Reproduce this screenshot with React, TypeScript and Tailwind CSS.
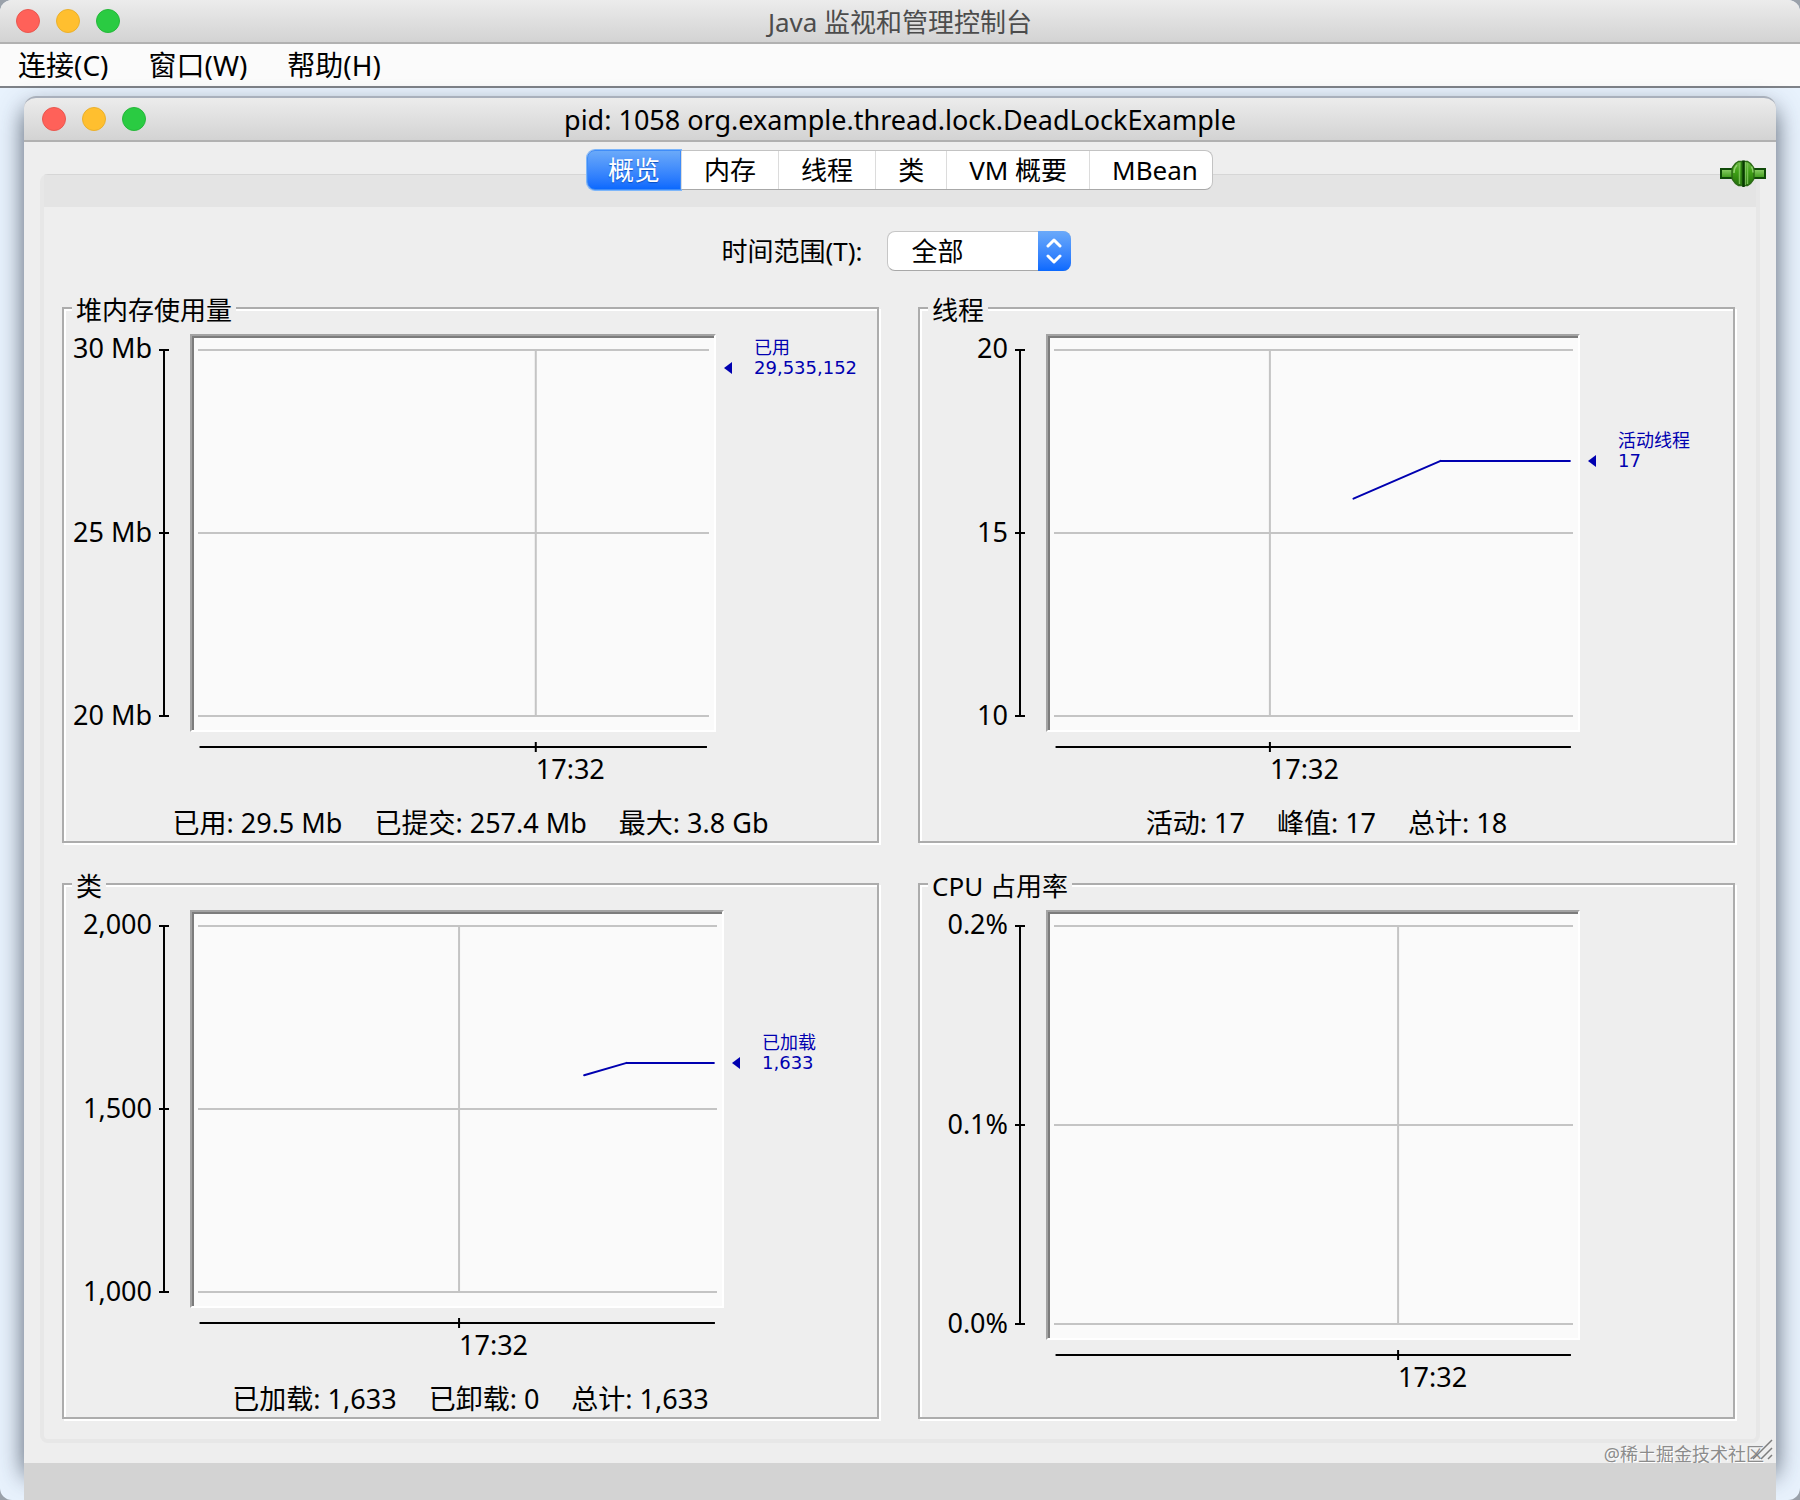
import React, { useState } from "react";

type Point = [number, number];

interface ChartProps {
  title: string;
  yLabels: string[];
  tickX: number;
  tickLabel: string;
  plotClass: string;
  legendClass: string;
  series?: Point[];
  seriesName?: string;
  seriesValue?: string;
  // distance of the current value from the top of the plot, 0..1
  level?: number;
  summary?: string[];
}

const tabs = ["概览", "内存", "线程", "类", "VM 概要", "MBean"];
const menus = ["连接(C)", "窗口(W)", "帮助(H)"];
const ranges = ["全部", "1 分钟", "5 分钟", "10 分钟", "30 分钟", "1 小时"];

const charts: ChartProps[] = [
  {
    title: "堆内存使用量",
    yLabels: ["30 Mb", "25 Mb", "20 Mb"],
    tickX: 66.1,
    tickLabel: "17:32",
    plotClass: "h-[398px]",
    legendClass: "w-[161px]",
    seriesName: "已用",
    seriesValue: "29,535,152",
    level: 0.05,
    summary: ["已用: 29.5 Mb", "已提交: 257.4 Mb", "最大: 3.8 Gb"],
  },
  {
    title: "线程",
    yLabels: ["20", "15", "10"],
    tickX: 41.6,
    tickLabel: "17:32",
    plotClass: "h-[398px]",
    legendClass: "w-[153px]",
    series: [
      [57.7, 40.6],
      [74.5, 30.3],
      [99.4, 30.3],
    ],
    seriesName: "活动线程",
    seriesValue: "17",
    level: 0.303,
    summary: ["活动: 17", "峰值: 17", "总计: 18"],
  },
  {
    title: "类",
    yLabels: ["2,000", "1,500", "1,000"],
    tickX: 50.3,
    tickLabel: "17:32",
    plotClass: "h-[398px]",
    legendClass: "w-[153px]",
    series: [
      [74.4, 40.8],
      [82.6, 37.4],
      [99.4, 37.4],
    ],
    seriesName: "已加载",
    seriesValue: "1,633",
    level: 0.374,
    summary: ["已加载: 1,633", "已卸载: 0", "总计: 1,633"],
  },
  {
    title: "CPU 占用率",
    yLabels: ["0.2%", "0.1%", "0.0%"],
    tickX: 66.3,
    tickLabel: "17:32",
    plotClass: "h-[430px]",
    legendClass: "w-[153px]",
  },
];

const TrafficLights: React.FC = () => (
  <div className="flex gap-4">
    <button
      aria-label="关闭"
      className="size-6 rounded-full border border-[#e9574f] bg-[#ff6159]"
    />
    <button
      aria-label="最小化"
      className="size-6 rounded-full border border-[#eab02c] bg-[#ffbf2f]"
    />
    <button
      aria-label="缩放"
      className="size-6 rounded-full border border-[#25b83a] bg-[#2acb42]"
    />
  </div>
);

const ConnectedIcon: React.FC = () => (
  <svg width="46" height="28" viewBox="0 0 46 28" aria-hidden="true">
    <defs>
      <linearGradient id="plug" x1="0" y1="0" x2="0" y2="1">
        <stop offset="0" stopColor="#6fbb47" />
        <stop offset="0.4" stopColor="#41a317" />
        <stop offset="1" stopColor="#23700a" />
      </linearGradient>
      <linearGradient id="rod" x1="0" y1="0" x2="0" y2="1">
        <stop offset="0" stopColor="#8ed06a" />
        <stop offset="1" stopColor="#3c9a18" />
      </linearGradient>
    </defs>
    <rect x="1" y="9" width="14" height="9" fill="url(#rod)" stroke="#0f4a08" strokeWidth="2" />
    <rect x="31" y="9" width="14" height="9" fill="url(#rod)" stroke="#0f4a08" strokeWidth="2" />
    <path
      d="M18.500 1.500h9l3 2 3 4 .5 3v6l-.5 3-3 4-3 2h-9l-3-2-3-4-.5-3v-6l.5-3 3-4z"
      fill="url(#plug)"
      stroke="#2c6b17"
      strokeWidth="1.500"
    />
    <path d="M17 5q-3 3-3 8M31.500 6.500q1.500 3 1.500 6" fill="none" stroke="#8fd16c" strokeWidth="1.500" />
    <path d="M19.500 3v21M27.500 3v21" stroke="#76bf52" strokeWidth="1.500" />
    <path d="M21.500 2v23" stroke="#2a7a10" strokeWidth="1.500" />
    <path d="M25.200 2v23" stroke="#93d174" strokeWidth="1" />
    <path d="M23.500 0.500v26.500" stroke="#083a02" strokeWidth="2.500" />
  </svg>
);

const Chart: React.FC<ChartProps> = ({
  title,
  yLabels,
  tickX,
  tickLabel,
  plotClass,
  legendClass,
  series = [],
  seriesName,
  seriesValue,
  level = 0,
  summary,
}) => (
  <fieldset className="min-w-0 border-2 border-[#acacac] pl-2 shadow-[2px_2px_0_#fff,inset_2px_2px_0_#fff]">
    <legend className="bg-[#eeeeee] px-1 pt-1 leading-8">{title}</legend>
    <div className="flex pt-2 text-[27px]">
      {/* Y axis */}
      <div className={`flex w-[118px] shrink-0 ${plotClass}`}>
        <div className="flex w-20 flex-col justify-between pb-[3px] text-right leading-7 whitespace-nowrap">
          {yLabels.map((label) => (
            <span key={label}>{label}</span>
          ))}
        </div>
        <div className="w-[18px] py-4 pl-2">
          <svg className="block h-full w-[10px] overflow-visible" stroke="#000" strokeWidth="2">
            <line x1="4" y1="0" x2="4" y2="100%" />
            <line x1="-1" y1="0" x2="9" y2="0" />
            <line x1="-1" y1="50%" x2="9" y2="50%" />
            <line x1="-1" y1="100%" x2="9" y2="100%" />
          </svg>
        </div>
      </div>

      {/* Plot and time axis */}
      <div className="min-w-0 flex-1">
        <div
          className={`border-2 border-t-[#a3a3a3] border-r-white border-b-white border-l-[#a3a3a3] bg-[#fafafa] py-3.5 pr-[5px] pl-1.5 shadow-[inset_2px_2px_0_#7c7c7c] ${plotClass}`}
        >
          <svg className="block h-full w-full overflow-visible" strokeWidth="2">
            <g stroke="#c4c4c4">
              <line x1="0" y1="0" x2="100%" y2="0" />
              <line x1="0" y1="50%" x2="100%" y2="50%" />
              <line x1="0" y1="100%" x2="100%" y2="100%" />
              <line x1={`${tickX}%`} y1="0" x2={`${tickX}%`} y2="100%" />
            </g>
            {series.slice(1).map(([x, y], i) => (
              <line
                key={x}
                x1={`${series[i][0]}%`}
                y1={`${series[i][1]}%`}
                x2={`${x}%`}
                y2={`${y}%`}
                stroke="#0000b0"
                strokeLinecap="round"
              />
            ))}
          </svg>
        </div>
        <div className="pr-[7px] pl-2">
          <svg className="block h-14 w-full overflow-visible">
            <line x1="0.3%" y1="15" x2="99.6%" y2="15" stroke="#000" strokeWidth="2" />
            <line x1={`${tickX}%`} y1="10" x2={`${tickX}%`} y2="20" stroke="#000" strokeWidth="2" />
            <text x={`${tickX}%`} y="47">
              {tickLabel}
            </text>
          </svg>
        </div>
      </div>

      {/* Current value */}
      <div className={`shrink-0 ${legendClass}`}>
        {seriesName && (
          <div
            className="flex items-end pl-2 text-[18px] leading-5 text-[#0000b0]"
            style={{ marginTop: Math.round(level * 366) - 14 }}
          >
            <svg width="30" height="20" viewBox="0 0 30 20" aria-hidden="true">
              <path d="M0 10l8-6v12z" fill="#0000b0" />
            </svg>
            <div className="font-['DejaVu_Sans','Noto_Sans_CJK_SC',sans-serif]">
              <div>{seriesName}</div>
              <div>{seriesValue}</div>
            </div>
          </div>
        )}
      </div>
    </div>
    {summary && (
      <div className="flex justify-center gap-8 pt-[19px] pr-2 pb-0.5 text-[27px] leading-8">
        {summary.map((item) => (
          <span key={item}>{item}</span>
        ))}
      </div>
    )}
  </fieldset>
);

const App: React.FC = () => {
  const [activeTab, setActiveTab] = useState("概览");
  const [range, setRange] = useState("全部");

  return (
    <div className="flex min-h-screen flex-col bg-[#9aa1aa] font-['Noto_Sans','Noto_Sans_CJK_SC',sans-serif] text-[26px] leading-8 text-black">
      <div className="flex flex-1 flex-col overflow-hidden rounded-xl bg-[#e8f2fd]">
        {/* Console title bar */}
        <header className="grid h-11 grid-cols-[1fr_auto_1fr] items-center border-b-2 border-[#b1b1b1] bg-linear-to-b from-[#ececec] to-[#d3d3d3] px-4">
          <TrafficLights />
          <h1 className="pt-0.5 text-[#4c4c4c]">Java 监视和管理控制台</h1>
        </header>

        {/* Menu bar */}
        <nav className="flex h-11 items-center gap-10 border-b-2 border-[#7e8288] bg-[#fbfbfb] pl-[18px] text-[28px]">
          {menus.map((menu) => (
            <button key={menu}>{menu}</button>
          ))}
        </nav>

        <main className="flex flex-1 flex-col px-6 pt-2">
          {/* Connection window */}
          <section className="relative rounded-t-xl bg-[#eeeeee] shadow-[0_12px_24px_rgba(34,44,62,0.75)]">
            <header className="grid h-[46px] grid-cols-[1fr_auto_1fr] items-center rounded-t-xl border-t-2 border-b-2 border-t-[#a9b0bc] border-b-[#b1b1b1] bg-linear-to-b from-[#ececec] to-[#d3d3d3] px-[18px]">
              <TrafficLights />
              <h2 className="pt-0.5 text-[27px]">pid: 1058 org.example.thread.lock.DeadLockExample</h2>
            </header>

            <div className="px-4 pt-2 pb-5">
              <div className="relative z-10 flex justify-center">
                <div role="tablist" className="flex h-10 rounded-lg border border-[#c3c3c3] border-b-[#a8a8a8] bg-white">
                  {tabs.map((tab) => (
                    <button
                      key={tab}
                      role="tab"
                      aria-selected={activeTab === tab}
                      onClick={() => setActiveTab(tab)}
                      className={
                        activeTab === tab
                          ? "-my-px -ml-px rounded-l-lg border border-[#3f8cf8] bg-linear-to-b from-[#6aa9f9] to-[#0a69fe] px-5 text-white shadow-[0_0_0_1px_#7db6fa] [text-shadow:0_1px_1px_#0a4fc0]"
                          : "border-l border-[#dcdcdc] px-[22px] first:border-l-0 last:pr-3.5"
                      }
                    >
                      {tab}
                    </button>
                  ))}
                </div>
                <div className="absolute -right-1.5 top-2.5">
                  <ConnectedIcon />
                </div>
              </div>

              {/* Tab content */}
              <div
                role="tabpanel"
                className="-mt-4 rounded-lg border-x-4 border-t border-b-4 border-x-[#e7e7e7] border-t-[#d6d6d6] border-b-[#e7e7e7]"
              >
                <div className="h-8 bg-[#e4e4e4]" />
                <div className="flex items-center justify-center gap-6 pt-6 pr-2">
                  <label htmlFor="range">时间范围(T):</label>
                  <div className="relative">
                    <select
                      id="range"
                      value={range}
                      onChange={(e) => setRange(e.target.value)}
                      className="h-10 w-[184px] appearance-none rounded-lg border border-[#c6c6c6] border-b-[#a8a8a8] bg-white pl-6"
                    >
                      {ranges.map((item) => (
                        <option key={item}>{item}</option>
                      ))}
                    </select>
                    <span className="pointer-events-none absolute top-0 right-0 flex h-10 w-[33px] items-center justify-center rounded-r-lg bg-linear-to-b from-[#6aa9f9] to-[#0a69fe]">
                      <svg width="18" height="26" viewBox="0 0 18 26" fill="none" stroke="#fff" strokeWidth="3" strokeLinecap="round" strokeLinejoin="round">
                        <path d="M3 8l6-6 6 6M3 18l6 6 6-6" />
                      </svg>
                    </span>
                  </div>
                </div>

                <div className="grid grid-cols-2 gap-x-[39px] gap-y-[23px] pt-[19px] pr-[21px] pb-5 pl-[18px]">
                  {charts.map((chart) => (
                    <Chart key={chart.title} {...chart} />
                  ))}
                </div>
              </div>
            </div>

            {/* Watermark and resize grip */}
            <span className="absolute right-3 -bottom-px text-[18px] leading-5 text-[#8c8c8c] [text-shadow:1px_1px_0_#fff]">
              @稀土掘金技术社区
            </span>
            <svg
              className="absolute right-0.5 bottom-0.5"
              width="22"
              height="22"
              viewBox="0 0 22 22"
              stroke="#7d7d7d"
              strokeWidth="1.5"
              aria-hidden="true"
            >
              <path d="M1 20L20 1M9 20L20 9M16 20l4-4" />
            </svg>
          </section>
          <div className="relative min-h-9 flex-1 bg-[#d3d3d3]" />
        </main>
      </div>
    </div>
  );
};

export default App;
